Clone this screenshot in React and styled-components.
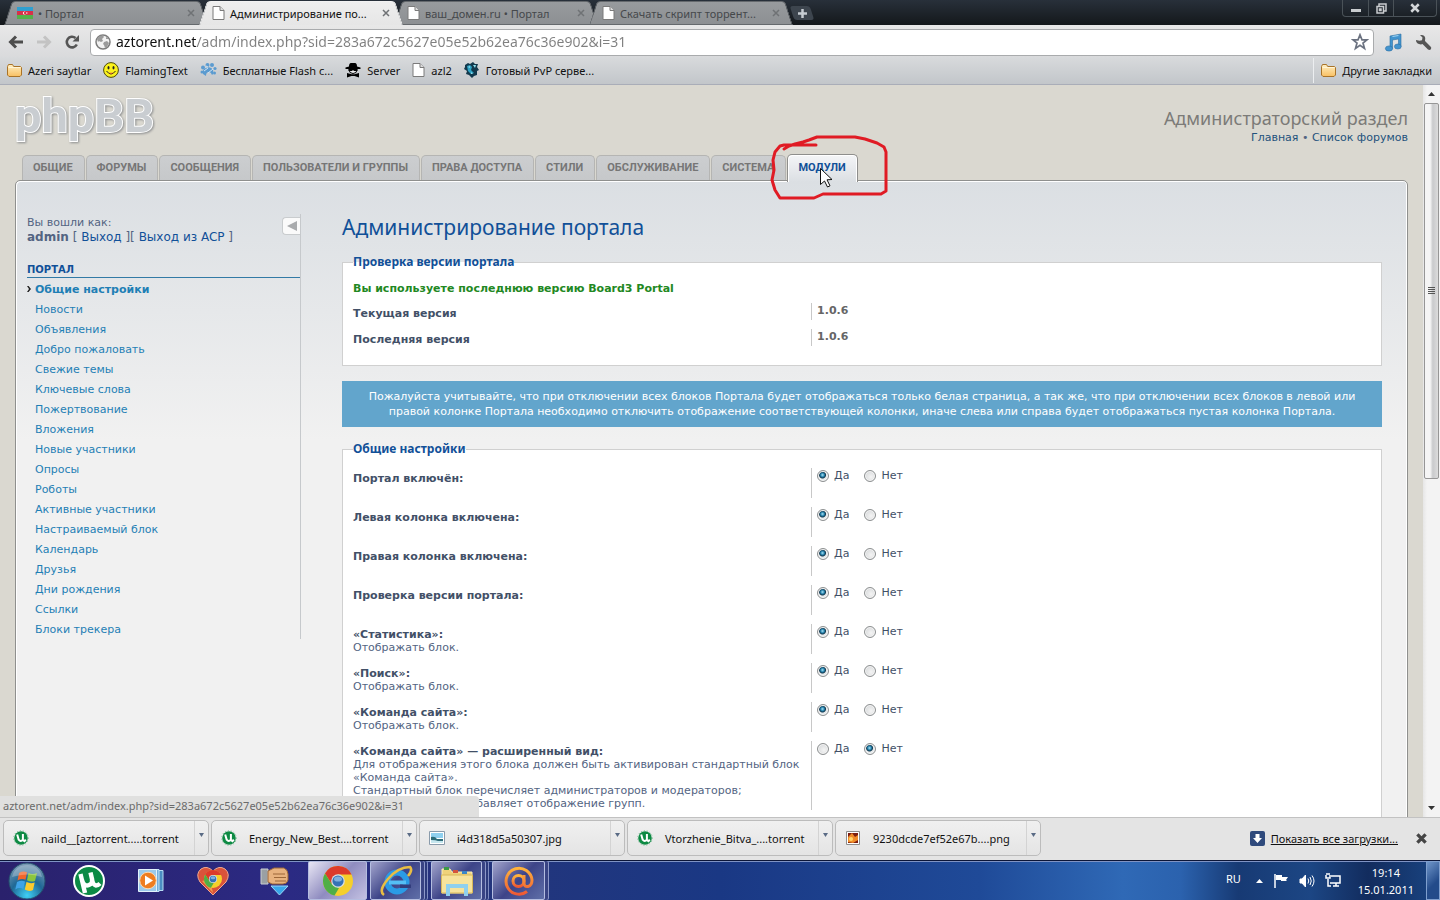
import React, { useState } from "react";
import styled, { createGlobalStyle, css } from "styled-components";

const uiFont = `"Noto Sans", "Open Sans", sans-serif`;
const pageFont = `"DejaVu Sans", Verdana, sans-serif`;

/* ---------- data ---------- */

const browserTabs = [
  { title: "• Портал", icon: "flag" },
  { title: "Администрирование по...", icon: "page", active: true },
  { title: "ваш_домен.ru • Портал", icon: "page" },
  { title: "Скачать скрипт торрент...", icon: "page" },
];

const bookmarks = [
  { title: "Azeri saytlar", icon: "folder" },
  { title: "FlamingText", icon: "smiley" },
  { title: "Бесплатные Flash с...", icon: "paw" },
  { title: "Server", icon: "agent" },
  { title: "azl2", icon: "page" },
  { title: "Готовый PvP серве...", icon: "dragon" },
];

const sections = [
  "Общие",
  "Форумы",
  "Сообщения",
  "Пользователи и группы",
  "Права доступа",
  "Стили",
  "Обслуживание",
  "Система",
  "Модули",
];

const menuItems = [
  "Общие настройки",
  "Новости",
  "Объявления",
  "Добро пожаловать",
  "Свежие темы",
  "Ключевые слова",
  "Пожертвование",
  "Вложения",
  "Новые участники",
  "Опросы",
  "Роботы",
  "Активные участники",
  "Настраиваемый блок",
  "Календарь",
  "Друзья",
  "Дни рождения",
  "Ссылки",
  "Блоки трекера",
];

const settings = [
  { id: "portal", label: "Портал включён:", value: true },
  { id: "left", label: "Левая колонка включена:", value: true },
  { id: "right", label: "Правая колонка включена:", value: true },
  { id: "version", label: "Проверка версии портала:", value: true },
  { id: "stats", label: "«Статистика»:", hint: ["Отображать блок."], value: true },
  { id: "search", label: "«Поиск»:", hint: ["Отображать блок."], value: true },
  { id: "team", label: "«Команда сайта»:", hint: ["Отображать блок."], value: true },
  {
    id: "teamext",
    label: "«Команда сайта» — расширенный вид:",
    hint: [
      "Для отображения этого блока должен быть активирован стандартный блок «Команда сайта».",
      "Стандартный блок перечисляет администраторов и модераторов;",
      "Расширенный вид добавляет отображение групп.",
    ],
    value: false,
  },
];

const downloads = [
  { name: "naild__[aztorrent.....torrent", icon: "torrent" },
  { name: "Energy_New_Best....torrent", icon: "torrent" },
  { name: "i4d318d5a50307.jpg", icon: "image" },
  { name: "Vtorzhenie_Bitva_....torrent", icon: "torrent" },
  { name: "9230dcde7ef52e67b....png", icon: "png" },
];

/* ---------- icons ---------- */

const icons = {
  flag: (
    <svg width="16" height="12" viewBox="0 0 16 12">
      <path fill="#2f9fd0" d="M0 0h16v4H0z" />
      <path fill="#d8304a" d="M0 4h16v4H0z" />
      <path fill="#55b04a" d="M0 8h16v4H0z" />
      <circle cx="7.5" cy="6" r="1.6" fill="#fff" />
      <circle cx="8.1" cy="6" r="1.2" fill="#d8304a" />
      <circle cx="9.8" cy="6" r=".7" fill="#fff" />
    </svg>
  ),
  page: (
    <svg width="13" height="14" viewBox="0 0 13 14">
      <path fill="#fff" stroke="#7b7b7b" d="M1 .5h7l4 4v9H1z" />
      <path fill="#ddd" stroke="#7b7b7b" d="M8 .5v4h4" />
    </svg>
  ),
  folder: (
    <svg width="15" height="13" viewBox="0 0 15 13">
      <defs>
        <linearGradient id="folder" x1="0" y1="0" x2="0" y2="1">
          <stop offset="0" stopColor="#fff0c4" />
          <stop offset="1" stopColor="#f8bf62" />
        </linearGradient>
      </defs>
      <path
        fill="url(#folder)"
        stroke="#a97328"
        d="M.5 11V2.5l1-2h4l1.2 2h6.8l1 1V11l-1.500 1.500h-11z"
      />
      <path stroke="#fff5d6" fill="none" d="M1.500 3.500h12" />
    </svg>
  ),
  smiley: (
    <svg width="16" height="16" viewBox="0 0 16 16">
      <circle cx="8" cy="8" r="7.400" fill="#fbf21c" stroke="#4b4a0c" />
      <ellipse cx="5.500" cy="5.800" rx="1" ry="1.700" fill="#222" />
      <ellipse cx="10.500" cy="5.800" rx="1" ry="1.700" fill="#222" />
      <path d="M3.500 9q4.500 6 9 0" fill="none" stroke="#222" />
      <path d="M5.500 10.800q2.500 1.700 5 0" fill="#e53" />
    </svg>
  ),
  paw: (
    <svg width="17" height="16" viewBox="0 0 17 16" fill="#5b9bd0">
      <path d="M3 12q-1-5 3-6 5-2 7 2 1 4-1 5-1-3-3-3-3 0-3 4z" />
      <circle cx="3" cy="5.500" r="2" />
      <circle cx="7.500" cy="3" r="2" />
      <circle cx="12" cy="3" r="2" />
      <circle cx="15" cy="6.500" r="1.600" />
      <circle cx="2" cy="10" r="1.500" />
      <circle cx="14.500" cy="11" r="1.500" />
      <path stroke="#cfe4f5" fill="none" d="M4 9l4-3M8 11l5-4M6 4l2 1" />
    </svg>
  ),
  agent: (
    <svg width="16" height="16" viewBox="0 0 16 16">
      <path d="M4 4.500Q4 1 6 1h4q2 0 2 3.500l3.500 1v1.500H.5V5.500z" />
      <path fill="#eee" stroke="#000" d="M4 7.500h8q0 4-4 4t-4-4z" />
      <path d="M3.500 7h9v2H9L8 8 7 9H3.500zM2 11l4.500 1.200h3L14 11v4.500L9.500 14h-3L2 15.500z" />
    </svg>
  ),
  dragon: (
    <svg width="16" height="16" viewBox="0 0 16 16">
      <path
        fill="#12394d"
        d="M1 3l3-2 2 1 3-2 2 2 3 0-1 3 2 3-2 1 0 4-3 1-2 2-3-3-3-1 1-3-3-2 1-2z"
      />
      <path fill="#2fa4c6" d="M3 4l3-1 2 2-1 3 3 3-3 1-3-3z" />
      <path fill="#8fe0ef" d="M4 5l2-1v2zM9 3l3 0-1 3zM7 10l2 2-2 0z" />
    </svg>
  ),
  torrent: (
    <svg width="16" height="16" viewBox="0 0 16 16">
      <circle cx="8" cy="8" r="6.800" fill="#0d8a43" />
      <circle cx="8" cy="8" r="7.300" fill="none" stroke="#75b78f" strokeDasharray="1 2" />
      <path d="M4.200 4.500l1.500 5.200q2 2.600 4.200 0V4M9.500 10l2 1.200 1.300-1.500" fill="none" stroke="#fff" strokeWidth="2" />
    </svg>
  ),
  image: (
    <svg width="16" height="14" viewBox="0 0 16 14">
      <path fill="#fff" stroke="#8a9bab" d="M.5.500h15v13H.5z" />
      <path fill="#8fd0ef" d="M2 2h12v5H2z" />
      <path fill="#2c6b78" d="M2 6q4-1 6 2h6v4H2z" />
      <path fill="#c6e7ef" d="M2 9q5 0 7 1h5v2H2z" />
    </svg>
  ),
  png: (
    <svg width="16" height="14" viewBox="0 0 16 14">
      <path fill="#fff" stroke="#8d8d8d" d="M1.500.500h13v13h-13z" />
      <path fill="#7c1e10" d="M3 2h10v10H3z" />
      <path fill="#f08b28" d="M3 6l4-4 3 4 3-2v5l-5 3-5-1z" />
      <circle cx="6" cy="8" r="2" fill="#ffd76b" />
    </svg>
  ),
};

const BackIcon = ({ dim }) => (
  <svg width="16" height="14" viewBox="0 0 16 14" fill="none" stroke={dim ? "#c3c3c3" : "#4d4d4d"} strokeWidth="3">
    {dim ? <path d="M1 7h12M8 1.500L13.500 7 8 12.500" /> : <path d="M15 7H3M8 1.500L2.500 7 8 12.500" />}
  </svg>
);

const ReloadIcon = () => (
  <svg width="16" height="16" viewBox="0 0 16 16">
    <path d="M12.800 10.500A5.300 5.300 0 1 1 11.500 4" fill="none" stroke="#555" strokeWidth="2.600" />
    <path fill="#555" d="M15 1v6.500H8.500z" />
  </svg>
);

const GlobeIcon = () => (
  <svg width="16" height="16" viewBox="0 0 16 16">
    <circle cx="8" cy="8" r="7" fill="#f2f2f2" stroke="#7c7c7c" strokeWidth="1.500" />
    <path fill="#9b9b9b" d="M2 5q2-4 6-3.500L9 3 7 5l1 2-2 1-2-1-1 1zM9 8l3-1 2 2-2 4-2 1-1-3-1-1zM11 3l2 1 0 1-2 0z" />
  </svg>
);

const StarIcon = () => (
  <svg width="18" height="18" viewBox="0 0 18 18">
    <path
      d="M9 1.800l2 5h5l-4 3.300 1.500 5.400L9 12.300l-4.500 3.200L6 10.100 2 6.800h5z"
      fill="#fff"
      stroke="#6b7280"
      strokeWidth="1.700"
    />
  </svg>
);

const MusicIcon = () => (
  <svg width="19" height="19" viewBox="0 0 19 19" fill="#4294cf" stroke="#2d6fa3" strokeWidth=".6">
    <path d="M6 3l11-2v12.500h-2.500V6L8.500 7v8.500H6z" />
    <ellipse cx="5" cy="15.500" rx="3.600" ry="2.600" />
    <ellipse cx="13.800" cy="13.500" rx="3.400" ry="2.500" />
    <path d="M8.500 3.500l6-1" stroke="#9fd3f2" strokeWidth="1.200" />
  </svg>
);

const WrenchIcon = () => (
  <svg width="17" height="17" viewBox="0 0 17 17">
    <path
      fill="#555"
      d="M1 6q0 3 3 4 2 .8 3.500 0l5.500 5.500q2 1 3-.5.800-1.400-.5-2.500L10 7Q11 4 9.500 2.200 8 .5 5 1l2.500 2.500-.5 2.700-2.500.5z"
    />
  </svg>
);

const StartOrb = () => (
  <svg width="38" height="38" viewBox="0 0 38 38">
    <defs>
      <radialGradient id="orb" cx=".5" cy=".9" r=".9">
        <stop offset="0" stopColor="#3fd0f5" />
        <stop offset=".5" stopColor="#1f6896" />
        <stop offset="1" stopColor="#7e9cb5" />
      </radialGradient>
    </defs>
    <circle cx="19" cy="19" r="18" fill="url(#orb)" stroke="#25506e" />
    <path fill="#f0662b" d="M11 11q4-2.500 8-.8l-1.500 7.500q-4-1.500-8 .8z" />
    <path fill="#8cc63e" d="M20.500 11q4 2 8.500 0l-2 8q-4 1.500-8-.8z" />
    <path fill="#3fa3e8" d="M9 20q4-2.200 8-.6L15.300 27q-4-2-8 .5z" />
    <path fill="#fccb2e" d="M18.500 20q4 2 8.200.5L25 28q-4 2-8.200-.5z" />
    <path fill="#fff" opacity=".25" d="M4 15Q7 3 19 3t15 12q-15-5-30 0z" />
  </svg>
);

const UTorrentIcon = () => (
  <svg width="34" height="34" viewBox="0 0 34 34">
    <circle cx="17" cy="17" r="15" fill="#0c8a45" stroke="#fff" strokeWidth="2" />
    <path d="M8.500 10l4.500 19M10 16q2 7 7 5 4-1.500 3-6l-1.500-6.500M20 15q1 6 4 6.500 2 0 4-2" fill="none" stroke="#fff" strokeWidth="4.400" />
  </svg>
);

const PlayerIcon = () => (
  <svg width="28" height="28" viewBox="0 0 28 28">
    <path fill="#4b8ec2" stroke="#b6dcf3" d="M8 3.500h18v20H8z" />
    <path fill="#73aedb" stroke="#c4e4f8" d="M5 2.500h17v22H5z" />
    <path fill="#9ccaea" stroke="#e3f3fc" d="M1.500 2.500h18v22h-18z" />
    <circle cx="11" cy="13.500" r="8.300" fill="#ee7d20" stroke="#fbd9b2" />
    <path fill="#fff" d="M8 8.500l8 5-8 5z" />
  </svg>
);

const Wheel = ({ cx, cy, r }) => (
  <g transform={`translate(${cx} ${cy}) scale(${r / 15})`}>
    <circle r="15" fill="#f5cf2b" />
    <path fill="#dc3a2b" d="M-13-7.500A15 15 0 0 1 13.500-6.500H0L-6 3.500z" />
    <path fill="#4fae47" d="M-13-7.500L-6 3.500 1 7-3.500 14.600A15 15 0 0 1-13-7.500z" />
    <circle r="6.800" fill="#d9dfe4" />
    <circle r="5.600" fill="#3572b5" />
    <ellipse cy="-2" rx="4" ry="2.600" fill="#7fb0de" />
  </g>
);

const HeartIcon = () => (
  <svg width="34" height="30" viewBox="0 0 34 30">
    <path fill="#d9533b" stroke="#f2a98d" d="M17 29L4 16Q-1 8 5 3q6-4 12 2 6-6 12-2 6 5 1 13z" />
    <path fill="#f19a4a" d="M17 27L6 15l8-2z" />
    <Wheel cx={17} cy={13} r={9} />
  </svg>
);

const HandIcon = () => (
  <svg width="30" height="30" viewBox="0 0 30 30">
    <path fill="#39a7ea" stroke="#9cd8f8" d="M11 20h17l-8.500 9z" />
    <path fill="#9aa0a4" stroke="#c9cdd0" d="M1 3h7v15H1z" />
    <path fill="#e7b27e" stroke="#9c6738" d="M8 5l6-3h10q4 2 4 6v6q-1 4-5 4H12l-4-2z" />
    <path fill="none" stroke="#9c6738" d="M13 8h12M14 11.500h12M15 15h11" />
  </svg>
);

const ChromeIcon = () => (
  <svg width="32" height="32" viewBox="0 0 32 32">
    <Wheel cx={16} cy={16} r={15} />
  </svg>
);

const ExplorerIcon = () => (
  <svg width="34" height="34" viewBox="0 0 34 34">
    <circle cx="18" cy="18" r="9.500" fill="none" stroke="#2a9be6" strokeWidth="6" />
    <path d="M10 18.500h17" stroke="#55bff5" strokeWidth="4" />
    <path fill="#323d7c" d="M21 20.500h11v3.500H21z" />
    <path d="M5 31Q-1 27 9 15T31 3q3 3-2 9" fill="none" stroke="#e8bd44" strokeWidth="2.600" />
  </svg>
);

const FoldersIcon = () => (
  <svg width="34" height="32" viewBox="0 0 34 32">
    <path fill="#efd27a" stroke="#fbeeb8" d="M2 4h8l2 3h20v21H2z" />
    <path fill="#3c9a46" d="M4 2h5v3H4z" />
    <path fill="#d5543c" d="M13 5h5v3h-5z" />
    <path fill="#3a86c8" d="M22 6h5v3h-5z" />
    <path fill="#f7e39c" stroke="#d8b85a" d="M1.500 10h31v18h-31z" />
    <path fill="none" stroke="#8fd0ee" strokeWidth="4" d="M8 31V21h18v10" />
  </svg>
);

const AgentMailIcon = () => (
  <svg width="32" height="32" viewBox="0 0 32 32" fill="none" strokeWidth="3">
    <defs>
      <linearGradient id="mail" x1="0" y1="0" x2="0" y2="1">
        <stop offset="0" stopColor="#ffb43c" />
        <stop offset="1" stopColor="#ee5a34" />
      </linearGradient>
    </defs>
    <g stroke="url(#mail)">
      <circle cx="15.500" cy="16" r="5.500" />
      <path d="M21 10v8q0 4 4 3.500 4-1 4-6.500A13 13 0 1 0 24 26.500" />
    </g>
  </svg>
);

const Plus = () => (
  <svg width="9" height="9" viewBox="0 0 9 9">
    <path d="M4.500 0v9M0 4.500h9" stroke="#c6ccd2" strokeWidth="2.500" />
  </svg>
);

const Cross = ({ size = 8, color = "#6f7275", weight = 1.5 }) => (
  <svg width={size} height={size} viewBox="0 0 8 8">
    <path d="M1 1l6 6M7 1L1 7" stroke={color} strokeWidth={weight} />
  </svg>
);

const Triangle = ({ color = "#333", up, size = 7 }) => (
  <svg width={size} height="4" viewBox="0 0 7 4" preserveAspectRatio="none">
    <path fill={color} d={up ? "M0 4l3.500-4L7 4z" : "M0 0h7L3.500 4z"} />
  </svg>
);

/* ---------- styles ---------- */

const GlobalStyle = createGlobalStyle`
  * {
    box-sizing: border-box;
  }

  body {
    margin: 0;
    overflow: hidden;
  }

  button {
    margin: 0;
    padding: 0;
    border: 0;
    background: none;
    font: inherit;
    color: inherit;
  }

  a {
    text-decoration: none;
  }

  svg {
    display: block;
    flex: none;
  }
`;

const Screen = styled.div`
  display: flex;
  flex-direction: column;
  height: 100vh;
  font-family: ${uiFont};
  font-size: 11px;
  color: #111;
`;

const TabStrip = styled.header`
  display: flex;
  align-items: flex-start;
  height: 25px;
  flex: none;
  padding-left: 4px;
  background: linear-gradient(#28303a, #14181b);
`;

const TabShell = styled.div`
  position: relative;
  z-index: ${({ $active }) => ($active ? 2 : 1)};
  display: flex;
  align-items: center;
  gap: 5px;
  width: 203px;
  height: 24px;
  margin: 1px -8px 0 0;
  padding: 0 12px 0 13px;
  color: ${({ $active }) => ($active ? "#111" : "#45484b")};

  &::before,
  &::after {
    content: "";
    position: absolute;
    z-index: -1;
    top: 0;
    bottom: 0;
    background: ${({ $active }) =>
      $active ? "linear-gradient(#eeeeee, #e6e6e6)" : "linear-gradient(#989b9e, #8d9093)"};
    border: 1px solid ${({ $active }) => ($active ? "#f2f2f2" : "#65696d")};
    border-bottom-width: ${({ $active }) => ($active ? 0 : "1px")};
  }

  &::before {
    left: 4px;
    right: 50%;
    border-right: 0;
    border-radius: 4px 0 0 0;
    transform: skewX(-18deg);
  }

  &::after {
    left: calc(50% - 8px);
    right: 4px;
    border-left: 0;
    border-radius: 0 4px 0 0;
    transform: skewX(18deg);
  }
`;

const TabTitle = styled.button`
  flex: 1;
  text-align: left;
  white-space: nowrap;
`;

const NewTab = styled.button`
  position: relative;
  z-index: 0;
  display: flex;
  align-items: center;
  justify-content: center;
  width: 24px;
  height: 14px;
  margin: 6px 0 0 6px;

  &::before {
    content: "";
    position: absolute;
    z-index: -1;
    inset: 0 2px;
    border-radius: 3px;
    background: #3d454e;
    transform: skewX(18deg);
  }
`;

const WindowButtons = styled.div`
  display: flex;
  height: 17px;
  margin: 0 3px 0 auto;
  border: 1px solid #4a5258;
  border-top: 0;
  border-radius: 0 0 4px 4px;
`;

const WindowButton = styled.button`
  display: flex;
  align-items: center;
  justify-content: center;
  width: ${({ $wide }) => ($wide ? "43px" : "25px")};
  border-left: ${({ $first }) => ($first ? "0" : "1px solid #4a5258")};
`;

const Toolbar = styled.div`
  display: flex;
  align-items: center;
  gap: 12px;
  height: 32px;
  flex: none;
  padding: 2px 8px 0;
  background: linear-gradient(#e8e8e8, #d9dadc);
`;

const OmniBox = styled.form`
  display: flex;
  align-items: center;
  flex: 1;
  gap: 5px;
  height: 27px;
  margin: 0 -2px 0 -2px;
  padding: 0 4px;
  border: 1px solid #a9abad;
  border-radius: 4px;
  background: #fff;
`;

// host name is dark, the rest of the address is grey
const Address = styled.input`
  flex: 1;
  min-width: 0;
  padding: 0;
  border: 0;
  outline: 0;
  background: linear-gradient(90deg, #111 81px, #808080 81px);
  background-clip: text;
  font-family: ${uiFont};
  font-size: 14px;
  line-height: 20px;
  color: transparent;
`;

const BookmarkBar = styled.nav`
  display: flex;
  align-items: center;
  gap: 12px;
  height: 28px;
  flex: none;
  padding: 0 8px 1px 7px;
  border-bottom: 1px solid #a9adb8;
  background: linear-gradient(#d8dadc, #c2c6ca);
`;

const Bookmark = styled.a`
  display: flex;
  align-items: center;
  gap: 6px;
  color: #111;
  white-space: nowrap;
`;

const OtherBookmarks = styled.div`
  display: flex;
  align-items: center;
  height: 25px;
  margin-left: auto;
  padding-left: 7px;
  border-left: 1px solid #eceef0;
`;

const Viewport = styled.div`
  position: relative;
  display: flex;
  flex: 1;
  min-height: 0;
`;

const Page = styled.div`
  flex: 1;
  height: 100%;
  overflow: hidden;
  padding: 0 15px;
  background: #dad8d0;
  font-family: ${pageFont};
  font-size: 11px;
  color: #536482;
`;

const PageHeader = styled.div`
  display: flex;
  justify-content: space-between;
  height: 68px;
`;

const Logo = styled.a`
  margin-top: 1px;
  font-family: Roboto, sans-serif;
  font-size: 47px;
  font-weight: 700;
  line-height: 60px;
  color: #c9cdd1;
  -webkit-text-stroke: 2px #fff;
  paint-order: stroke fill;
  filter: drop-shadow(1px 1px 1px #8d8f90);
`;

const HeaderText = styled.div`
  padding-top: 21px;
  text-align: right;
  line-height: 15px;

  h2 {
    margin: 0;
    font-family: ${uiFont};
    font-size: 18px;
    font-weight: 400;
    line-height: 24px;
    color: #7c7b78;
  }

  a {
    color: #23527c;
  }
`;

const SectionTabs = styled.nav`
  display: flex;
  align-items: flex-end;
  gap: 1px;
  height: 27px;
  padding-left: 7px;
`;

const SectionTab = styled.a`
  position: relative;
  height: 25px;
  padding: 0 11px 0 10px;
  border: 1px solid #b5b5b3;
  border-bottom: 0;
  border-radius: 5px 5px 0 0;
  background: linear-gradient(#ccced0, #c6c8ca);
  font-family: Roboto, Arial, sans-serif;
  font-size: 11px;
  font-weight: 700;
  line-height: 24px;
  text-transform: uppercase;
  white-space: nowrap;
  color: #767676;

  ${({ $active }) =>
    $active &&
    css`
      height: 28px;
      margin-bottom: -2px;
      border-color: #8e8e8c;
      background: linear-gradient(#f4f5f7, #dbdfe3);
      box-shadow: inset 1px 1px 0 #fff, inset -1px 0 0 #fff;
      line-height: 26px;
      color: #115098;
    `}
`;

// pen stroke and pointer lying over the active tab
const Marks = styled.svg`
  position: absolute;
  left: -19px;
  top: -20px;
  z-index: 3;
  pointer-events: none;
`;

const Main = styled.div`
  display: flex;
  align-items: flex-start;
  min-height: 1000px;
  padding: 33px 25px 0 11px;
  border: 1px solid #8f908e;
  border-radius: 5px 5px 0 0;
  background: linear-gradient(#dbdfe3, #f1f1f1 260px);
  box-shadow: inset 1px 1px 0 #fff, inset -1px 0 0 #fff;
`;

const Sidebar = styled.aside`
  width: 274px;
  flex: none;
  margin-right: 41px;
  border-right: 1px solid #c6c9cc;
`;

const UserBox = styled.div`
  display: flex;
  justify-content: space-between;
  align-items: flex-start;
  height: 47px;
  line-height: 15px;

  a {
    color: #115098;
  }
`;

const Collapse = styled.button`
  display: flex;
  align-items: center;
  justify-content: center;
  width: 18px;
  height: 18px;
  margin-top: 3px;
  border: 1px solid #c9ccce;
  border-right: 0;
  border-radius: 4px 0 0 4px;
  background: #fafafa;
`;

const MenuTitle = styled.h3`
  margin: 0;
  padding-top: 2px;
  border-bottom: 1px solid #327aa5;
  font-size: 10px;
  line-height: 14px;
  text-transform: uppercase;
  color: #115098;
`;

const UserText = styled.div`
  padding-top: 1px;
`;

const UserLinks = styled.div`
  font-size: 12px;
`;

const Menu = styled.ul`
  margin: 0;
  padding: 1px 0 0;
  list-style: none;
`;

const MenuItem = styled.li`
  display: flex;
  align-items: center;
  height: 20px;

  a {
    color: #1f7fb5;
    font-weight: ${({ $active }) => ($active ? 700 : 400)};
  }

  &::before {
    content: "";
    width: ${({ $active }) => ($active ? "4px" : 0)};
    height: 6px;
    margin-right: ${({ $active }) => ($active ? "4px" : "8px")};
    background: #222;
    clip-path: polygon(0 0, 40% 0, 100% 50%, 40% 100%, 0 100%, 50% 50%);
  }
`;

const Content = styled.main`
  flex: 1;
  min-width: 0;
`;

const Title = styled.h1`
  margin: 0 0 14px;
  font-family: ${uiFont};
  font-size: 21px;
  font-weight: 400;
  line-height: 26px;
  color: #115098;
`;

const Group = styled.fieldset`
  min-width: 0;
  margin: 0 0 15px;
  padding: 11px 10px 10px;
  border: 1px solid #d0d0d0;
  background: #fff;

  legend {
    padding: 0;
    font-family: ${uiFont};
    font-size: 12px;
    font-weight: 700;
    line-height: 16px;
    color: #115098;
  }
`;

const VersionNote = styled.p`
  margin: 0 0 7px;
  font-weight: 700;
  line-height: 15px;
  color: #228822;
`;

const Row = styled.div`
  display: grid;
  grid-template-columns: 45% 1fr;
  margin-bottom: 9px;
  line-height: 13px;
`;

const RowLabel = styled.div`
  min-height: ${({ $tall }) => ($tall ? "30px" : "17px")};
  padding: 4px 5px 0 0;

  strong {
    display: block;
    color: #425067;
  }

  span {
    display: block;
  }
`;

const RowValue = styled.div`
  display: flex;
  align-items: flex-start;
  gap: 15px;
  padding-left: 5px;
  border-left: 1px solid #c8c8c8;
  font-weight: ${({ $bold }) => ($bold ? 700 : 400)};
  line-height: 16px;
  color: ${({ $bold }) => ($bold ? "#666" : "#425067")};
`;

const Choice = styled.label`
  display: flex;
  align-items: center;
  gap: 5px;

  input {
    appearance: none;
    width: 12px;
    height: 12px;
    margin: 0;
    border: 1px solid #8c8f90;
    border-radius: 50%;
    background: radial-gradient(circle at 60% 60%, #f4f4f4, #cfd2d4);
    box-shadow: inset 0 0 0 1px #f6f6f6;
  }

  input:checked {
    background: radial-gradient(circle at 45% 40%, #a9e4f7 0, #1f7ba6 2px, #12394f 3px, #e6e9eb 4px);
  }
`;

const Notice = styled.div`
  margin-bottom: 14px;
  padding: 8px 10px;
  background: #62a5cc;
  line-height: 15px;
  text-align: center;
  color: #fff;
`;

const ScrollBar = styled.div`
  display: flex;
  flex-direction: column;
  width: 17px;
  flex: none;
  background: linear-gradient(90deg, #e6e6e6, #f3f3f3 4px);
`;

const ScrollArrow = styled.button`
  display: flex;
  align-items: center;
  justify-content: center;
  height: 18px;
`;

const ScrollTrack = styled.div`
  flex: 1;
`;

const Thumb = styled.div`
  display: flex;
  align-items: center;
  justify-content: center;
  width: 15px;
  height: 54%;
  margin-left: 1px;
  border: 1px solid #969696;
  border-radius: 2px;
  background: linear-gradient(90deg, #f5f5f5 40%, #c9cacc 60%, #dcdcdc);
`;

const StatusBubble = styled.div`
  position: absolute;
  left: 0;
  bottom: 0;
  width: 479px;
  height: 21px;
  padding-left: 3px;
  border-radius: 0 4px 0 0;
  background: #e0e0df;
  line-height: 20px;
  color: #6b6b6b;
`;

const DownloadShelf = styled.footer`
  display: flex;
  align-items: center;
  gap: 2px;
  height: 43px;
  flex: none;
  padding: 0 13px 2px 3px;
  border-top: 1px solid #c2c2c2;
  background: #e4e4e4;
`;

const DownloadItem = styled.div`
  display: flex;
  width: 206px;
  height: 36px;
  border: 1px solid #bcbcbc;
  border-radius: 5px;
  background: linear-gradient(#f0f0f0, #e4e4e4);
`;

const DownloadName = styled.button`
  display: flex;
  align-items: center;
  flex: 1;
  gap: 12px;
  padding-left: 9px;
  white-space: nowrap;
`;

const DownloadMenu = styled.button`
  display: flex;
  justify-content: center;
  width: 14px;
  padding-top: 12px;
  border-left: 1px solid #d3d3d3;
`;

const ShowAll = styled.a`
  display: flex;
  align-items: center;
  gap: 6px;
  margin: 0 16px 0 auto;
  color: #111;

  span {
    text-decoration: underline;
  }
`;

const TaskBar = styled.footer`
  display: flex;
  align-items: stretch;
  height: 40px;
  flex: none;
  border-top: 1px solid #0c1638;
  background: linear-gradient(
    90deg,
    #2a216c,
    #2b2a83 20%,
    #23357c 35%,
    #1a3884 50%,
    #1f4a98 68%,
    #2f69b6 78%,
    #2b62ae 82%,
    #173a74 86%,
    #1c4684 91%,
    #122c5e 95%,
    #1a4583
  );
  box-shadow: inset 0 1px 0 #7f93c4;
`;

const Launcher = styled.button`
  display: flex;
  align-items: center;
  justify-content: center;
  width: 62px;
`;

const StartButton = styled(Launcher)`
  width: 54px;
  margin-right: 4px;
`;

const OpenApps = styled.div`
  display: flex;
  gap: 3px;
  margin-left: 2px;
`;

const AppButton = styled.button`
  display: flex;
  align-items: center;
  justify-content: center;
  width: 59px;
  border: 1px solid #b4bde0;
  border-radius: 2px;
  background: ${({ $active }) =>
    $active
      ? "linear-gradient(135deg, #e8e6f4, #8f8cc0 50%, #c3c1e2)"
      : "linear-gradient(135deg, #a2a4cc, #3d4488 50%, #5f6fa8)"};

  ${({ $stack }) =>
    $stack &&
    css`
      width: ${$stack === 2 ? "51px" : "53px"};
      margin-right: ${$stack === 2 ? "7px" : "4px"};
      box-shadow: ${$stack === 2
        ? "3px 0 0 #394484, 4px 0 0 #8d98c8, 6px 0 0 #2c3a7c, 7px 0 0 #7f8cc0"
        : "3px 0 0 #394484, 4px 0 0 #8d98c8"};
    `}
`;

const Tray = styled.div`
  display: flex;
  align-items: center;
  gap: 10px;
  margin-left: auto;
  color: #fff;
`;

const Language = styled.button`
  margin: 0 5px 4px 0;
`;

const Clock = styled.div`
  margin: 0 2px 0 7px;
  line-height: 17px;
  text-align: center;
`;

const ShowDesktop = styled.button`
  width: 14px;
  height: 100%;
  border: 1px solid #7f9fce;
  background: linear-gradient(135deg, #6f95c9, #234b8a 60%);
`;

/* ---------- parts ---------- */

const BrowserTab = ({ tab }) => (
  <TabShell $active={tab.active}>
    {icons[tab.icon]}
    <TabTitle type="button">{tab.title}</TabTitle>
    <button type="button" aria-label="Закрыть вкладку">
      <Cross />
    </button>
  </TabShell>
);

const Setting = ({ item }) => {
  const [value, setValue] = useState(item.value);
  return (
    <Row role="radiogroup" aria-labelledby={`${item.id}-label`}>
      <RowLabel $tall>
        <strong id={`${item.id}-label`}>{item.label}</strong>
        {item.hint && item.hint.map((line) => <span key={line}>{line}</span>)}
      </RowLabel>
      <RowValue>
        <Choice>
          <input type="radio" name={item.id} checked={value} onChange={() => setValue(true)} />
          Да
        </Choice>
        <Choice>
          <input type="radio" name={item.id} checked={!value} onChange={() => setValue(false)} />
          Нет
        </Choice>
      </RowValue>
    </Row>
  );
};

const TabMarks = () => (
  <Marks width="122" height="70" viewBox="0 0 122 70" fill="none">
    <path
      d="M15 14l5-3 6-2 8-2 6-2 8-3h38l10 2 12 4 7 4 2 5v39l-5 3H54l-9 4H11l-5-8-3-10 2-10-1-10 2-8 5-6 4-1h32"
      stroke="#e01b24"
      strokeWidth="3"
      strokeLinejoin="round"
      strokeLinecap="round"
    />
    <path d="M51.500 33.500v16l4-3.500 3 6 2.500-1.200-3-6 5-.3z" fill="#fff" stroke="#111" />
  </Marks>
);

const App = () => {
  const [address, setAddress] = useState(
    "aztorent.net/adm/index.php?sid=283a672c5627e05e52b62ea76c36e902&i=31"
  );
  return (
    <>
      <GlobalStyle />
      <Screen>
        <TabStrip>
          {browserTabs.map((tab) => (
            <BrowserTab key={tab.title} tab={tab} />
          ))}
          <NewTab type="button" aria-label="Новая вкладка">
            <Plus />
          </NewTab>
          <WindowButtons>
            <WindowButton $first type="button" aria-label="Свернуть">
              <svg width="10" height="9" viewBox="0 0 10 9">
                <path fill="#c9cccf" d="M0 5h10v3H0z" />
              </svg>
            </WindowButton>
            <WindowButton type="button" aria-label="Восстановить">
              <svg width="11" height="11" viewBox="0 0 11 11" fill="none" stroke="#c9cccf" strokeWidth="1.500">
                <path d="M3 3V1h7v7H8M1 3.500h6.500V10H1zM3.500 6h1.500v1.500H3.500z" />
              </svg>
            </WindowButton>
            <WindowButton $wide type="button" aria-label="Закрыть">
              <Cross size={10} color="#d3d6d9" weight={2} />
            </WindowButton>
          </WindowButtons>
        </TabStrip>

        <Toolbar>
          <button type="button" aria-label="Назад">
            <BackIcon />
          </button>
          <button type="button" aria-label="Вперёд">
            <BackIcon dim />
          </button>
          <button type="button" aria-label="Обновить">
            <ReloadIcon />
          </button>
          <OmniBox onSubmit={(e) => e.preventDefault()}>
            <GlobeIcon />
            <Address
              type="text"
              aria-label="Адрес"
              spellCheck={false}
              value={address}
              onChange={(e) => setAddress(e.target.value)}
            />
            <button type="button" aria-label="Добавить в закладки">
              <StarIcon />
            </button>
          </OmniBox>
          <button type="button" aria-label="Музыка">
            <MusicIcon />
          </button>
          <button type="button" aria-label="Настройки">
            <WrenchIcon />
          </button>
        </Toolbar>

        <BookmarkBar>
          {bookmarks.map((item) => (
            <Bookmark href="#" key={item.title}>
              {icons[item.icon]}
              {item.title}
            </Bookmark>
          ))}
          <OtherBookmarks>
            <Bookmark href="#">
              {icons.folder}
              Другие закладки
            </Bookmark>
          </OtherBookmarks>
        </BookmarkBar>

        <Viewport>
          <Page>
            <PageHeader>
              <Logo href="#">phpBB</Logo>
              <HeaderText>
                <h2>Администраторский раздел</h2>
                <a href="#">Главная</a> • <a href="#">Список форумов</a>
              </HeaderText>
            </PageHeader>

            <SectionTabs>
              {sections.map((name) => (
                <SectionTab href="#" key={name} $active={name === "Модули"}>
                  {name}
                  {name === "Модули" && <TabMarks />}
                </SectionTab>
              ))}
            </SectionTabs>

            <Main>
              <Sidebar>
                <UserBox>
                  <UserText>
                    Вы вошли как:
                    <UserLinks>
                      <b>admin</b> [ <a href="#">Выход</a> ][ <a href="#">Выход из ACP</a> ]
                    </UserLinks>
                  </UserText>
                  <Collapse type="button" aria-label="Скрыть меню">
                    <svg width="10" height="10" viewBox="0 0 10 10">
                      <path fill="#a9abad" d="M10 0v10L0 5z" />
                    </svg>
                  </Collapse>
                </UserBox>
                <MenuTitle>Портал</MenuTitle>
                <Menu>
                  {menuItems.map((name, i) => (
                    <MenuItem key={name} $active={i === 0}>
                      <a href="#">{name}</a>
                    </MenuItem>
                  ))}
                </Menu>
              </Sidebar>

              <Content>
                <Title>Администрирование портала</Title>

                <Group>
                  <legend>Проверка версии портала</legend>
                  <VersionNote>Вы используете последнюю версию Board3 Portal</VersionNote>
                  <Row>
                    <RowLabel>
                      <strong>Текущая версия</strong>
                    </RowLabel>
                    <RowValue $bold>1.0.6</RowValue>
                  </Row>
                  <Row>
                    <RowLabel>
                      <strong>Последняя версия</strong>
                    </RowLabel>
                    <RowValue $bold>1.0.6</RowValue>
                  </Row>
                </Group>

                <Notice>
                  Пожалуйста учитывайте, что при отключении всех блоков Портала будет отображаться
                  только белая страница, а так же, что при отключении всех блоков в левой или правой
                  колонке Портала необходимо отключить отображение соответствующей колонки, иначе
                  слева или справа будет отображаться пустая колонка Портала.
                </Notice>

                <Group>
                  <legend>Общие настройки</legend>
                  {settings.map((item) => (
                    <Setting key={item.id} item={item} />
                  ))}
                </Group>
              </Content>
            </Main>
          </Page>

          <ScrollBar>
            <ScrollArrow type="button" aria-label="Вверх">
              <Triangle up />
            </ScrollArrow>
            <ScrollTrack>
              <Thumb>
                <svg width="7" height="8" viewBox="0 0 7 8">
                  <path d="M0 .5h7M0 2.500h7M0 4.500h7M0 6.500h7" stroke="#555" />
                </svg>
              </Thumb>
            </ScrollTrack>
            <ScrollArrow type="button" aria-label="Вниз">
              <Triangle />
            </ScrollArrow>
          </ScrollBar>

          <StatusBubble>
            aztorent.net/adm/index.php?sid=283a672c5627e05e52b62ea76c36e902&amp;i=31
          </StatusBubble>
        </Viewport>

        <DownloadShelf>
          {downloads.map((item) => (
            <DownloadItem key={item.name}>
              <DownloadName type="button">
                {icons[item.icon]}
                {item.name}
              </DownloadName>
              <DownloadMenu type="button" aria-label="Меню загрузки">
                <Triangle color="#5a6b85" size={5} />
              </DownloadMenu>
            </DownloadItem>
          ))}
          <ShowAll href="#">
            <svg width="15" height="15" viewBox="0 0 15 15">
              <rect width="15" height="15" rx="2" fill="#2f4a7c" />
              <path fill="#fff" d="M5.500 3h4v4H12l-4.500 5L3 7h2.500z" />
            </svg>
            <span>Показать все загрузки...</span>
          </ShowAll>
          <button type="button" aria-label="Закрыть панель загрузок">
            <Cross size={11} color="#444" weight={2.4} />
          </button>
        </DownloadShelf>

        <TaskBar>
          <StartButton type="button" aria-label="Пуск">
            <StartOrb />
          </StartButton>
          <Launcher type="button" aria-label="µTorrent">
            <UTorrentIcon />
          </Launcher>
          <Launcher type="button" aria-label="Проигрыватель">
            <PlayerIcon />
          </Launcher>
          <Launcher type="button" aria-label="Любимое">
            <HeartIcon />
          </Launcher>
          <Launcher type="button" aria-label="Загрузчик">
            <HandIcon />
          </Launcher>
          <OpenApps>
            <AppButton $active type="button" aria-label="Chrome">
              <ChromeIcon />
            </AppButton>
            <AppButton $stack={2} type="button" aria-label="Internet Explorer">
              <ExplorerIcon />
            </AppButton>
            <AppButton $stack={2} type="button" aria-label="Проводник">
              <FoldersIcon />
            </AppButton>
            <AppButton $stack={1} type="button" aria-label="Агент">
              <AgentMailIcon />
            </AppButton>
          </OpenApps>

          <Tray>
            <Language type="button">RU</Language>
            <button type="button" aria-label="Скрытые значки">
              <Triangle up color="#fff" />
            </button>
            <svg width="16" height="16" viewBox="0 0 16 16">
              <path d="M2 1v14" stroke="#fff" strokeWidth="1.500" />
              <path fill="#fff" d="M3 2h6v2h6l-2 3 1 1H8V7H3z" />
            </svg>
            <svg width="16" height="14" viewBox="0 0 16 14" fill="none" stroke="#fff">
              <path fill="#fff" d="M1 5h2l3.500-4v12L3 9H1z" />
              <path d="M9 4.500q1.500 2.500 0 5M11 3q2.500 4 0 8M13 1.500q4 5.500 0 11" />
            </svg>
            <svg width="16" height="15" viewBox="0 0 16 15" fill="none" stroke="#fff" strokeWidth="1.500">
              <path d="M6 3h9v7H5M8 13h6M11 10v3M3 6v7h3M1 2v3h4V2M2 0v2M4 0v2" />
            </svg>
            <Clock>
              19:14
              <br />
              15.01.2011
            </Clock>
            <ShowDesktop type="button" aria-label="Показать рабочий стол" />
          </Tray>
        </TaskBar>
      </Screen>
    </>
  );
};

export default App;
